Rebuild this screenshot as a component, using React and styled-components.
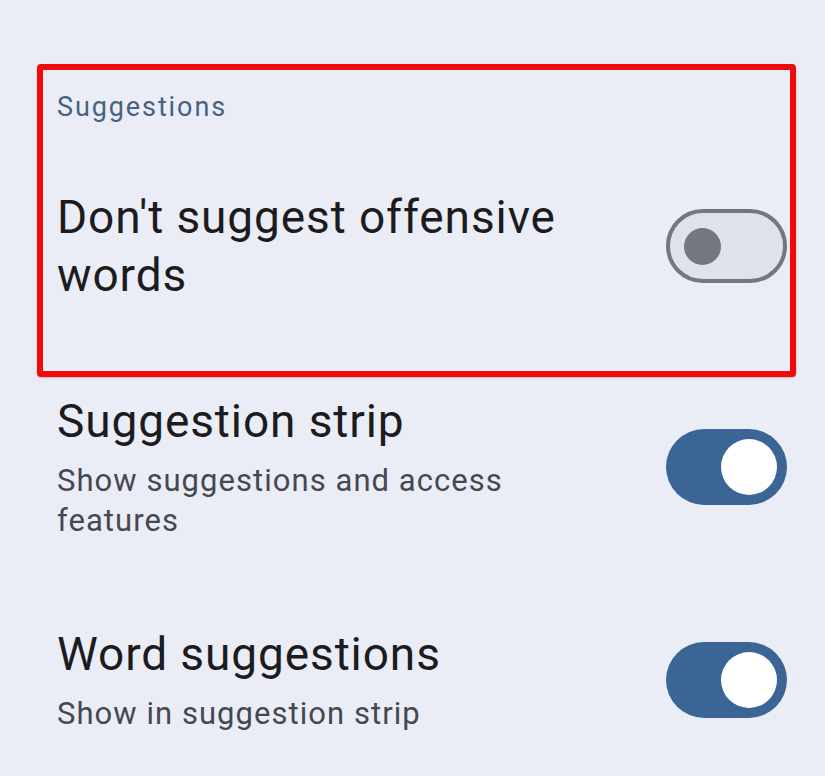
import React from "react";
import styled, { createGlobalStyle } from "styled-components";

const Global = createGlobalStyle`
  html, body {
    margin: 0;
    padding: 0;
    background: #eaedf6;
  }
  body {
    font-family: Roboto, "Noto Sans", sans-serif;
    -webkit-font-smoothing: antialiased;
  }
`;

const Page = styled.div`
  width: 825px;
  min-height: 776px;
  background: #eaedf6;
  overflow: hidden;
`;

const Highlight = styled.section`
  box-sizing: border-box;
  width: 759px;
  height: 313px;
  margin: 64px 0 0 37px;
  padding: 21px 3px 0 14px;
  border: 6px solid #f20a0a;
  border-radius: 4px;
  box-shadow: 0 1px 2px rgba(120, 0, 0, 0.25);
`;

const SectionLabel = styled.h2`
  margin: 0 0 64px;
  font-size: 27px;
  line-height: 33px;
  font-weight: 400;
  letter-spacing: 1.9px;
  color: #47627e;
`;

const List = styled.div`
  display: flex;
  flex-direction: column;
  gap: 84px;
  margin-top: 15px;
  padding: 0 38px 0 57px;
`;

const Row = styled.div`
  display: flex;
  align-items: center;
  justify-content: space-between;
  gap: 24px;
`;

const Texts = styled.div`
  display: flex;
  flex-direction: column;
  gap: 11px;
  max-width: 540px;
`;

const Title = styled.div`
  font-size: 46px;
  line-height: 58px;
  letter-spacing: 0.9px;
  color: #1c1c20;
`;

const Subtitle = styled.div`
  font-size: 31px;
  line-height: 40px;
  letter-spacing: 1.05px;
  color: #45484f;
`;

const Track = styled.div`
  box-sizing: border-box;
  flex: none;
  display: flex;
  align-items: center;
  justify-content: ${(p) => (p.$on ? "flex-end" : "flex-start")};
  width: 121px;
  height: ${(p) => (p.$on ? "76px" : "74px")};
  padding: ${(p) => (p.$on ? "0 10px" : "0 14px")};
  border-radius: 40px;
  border: ${(p) => (p.$on ? "none" : "4px solid #74777f")};
  background: ${(p) => (p.$on ? "#3a6594" : "#e0e2eb")};
`;

const Thumb = styled.div`
  width: ${(p) => (p.$on ? "56px" : "37px")};
  height: ${(p) => (p.$on ? "56px" : "37px")};
  border-radius: 50%;
  background: ${(p) => (p.$on ? "#ffffff" : "#74777f")};
`;

const Toggle = ({ on }) => (
  <Track $on={on} role="switch" aria-checked={on}>
    <Thumb $on={on} />
  </Track>
);

export default function App() {
  return (
    <Page>
      <Global />
      <Highlight>
        <SectionLabel>Suggestions</SectionLabel>
        <Row>
          <Texts>
            <Title>Don't suggest offensive words</Title>
          </Texts>
          <Toggle on={false} />
        </Row>
      </Highlight>
      <List>
        <Row>
          <Texts>
            <Title>Suggestion strip</Title>
            <Subtitle>Show suggestions and access features</Subtitle>
          </Texts>
          <Toggle on />
        </Row>
        <Row>
          <Texts>
            <Title>Word suggestions</Title>
            <Subtitle>Show in suggestion strip</Subtitle>
          </Texts>
          <Toggle on />
        </Row>
      </List>
    </Page>
  );
}
